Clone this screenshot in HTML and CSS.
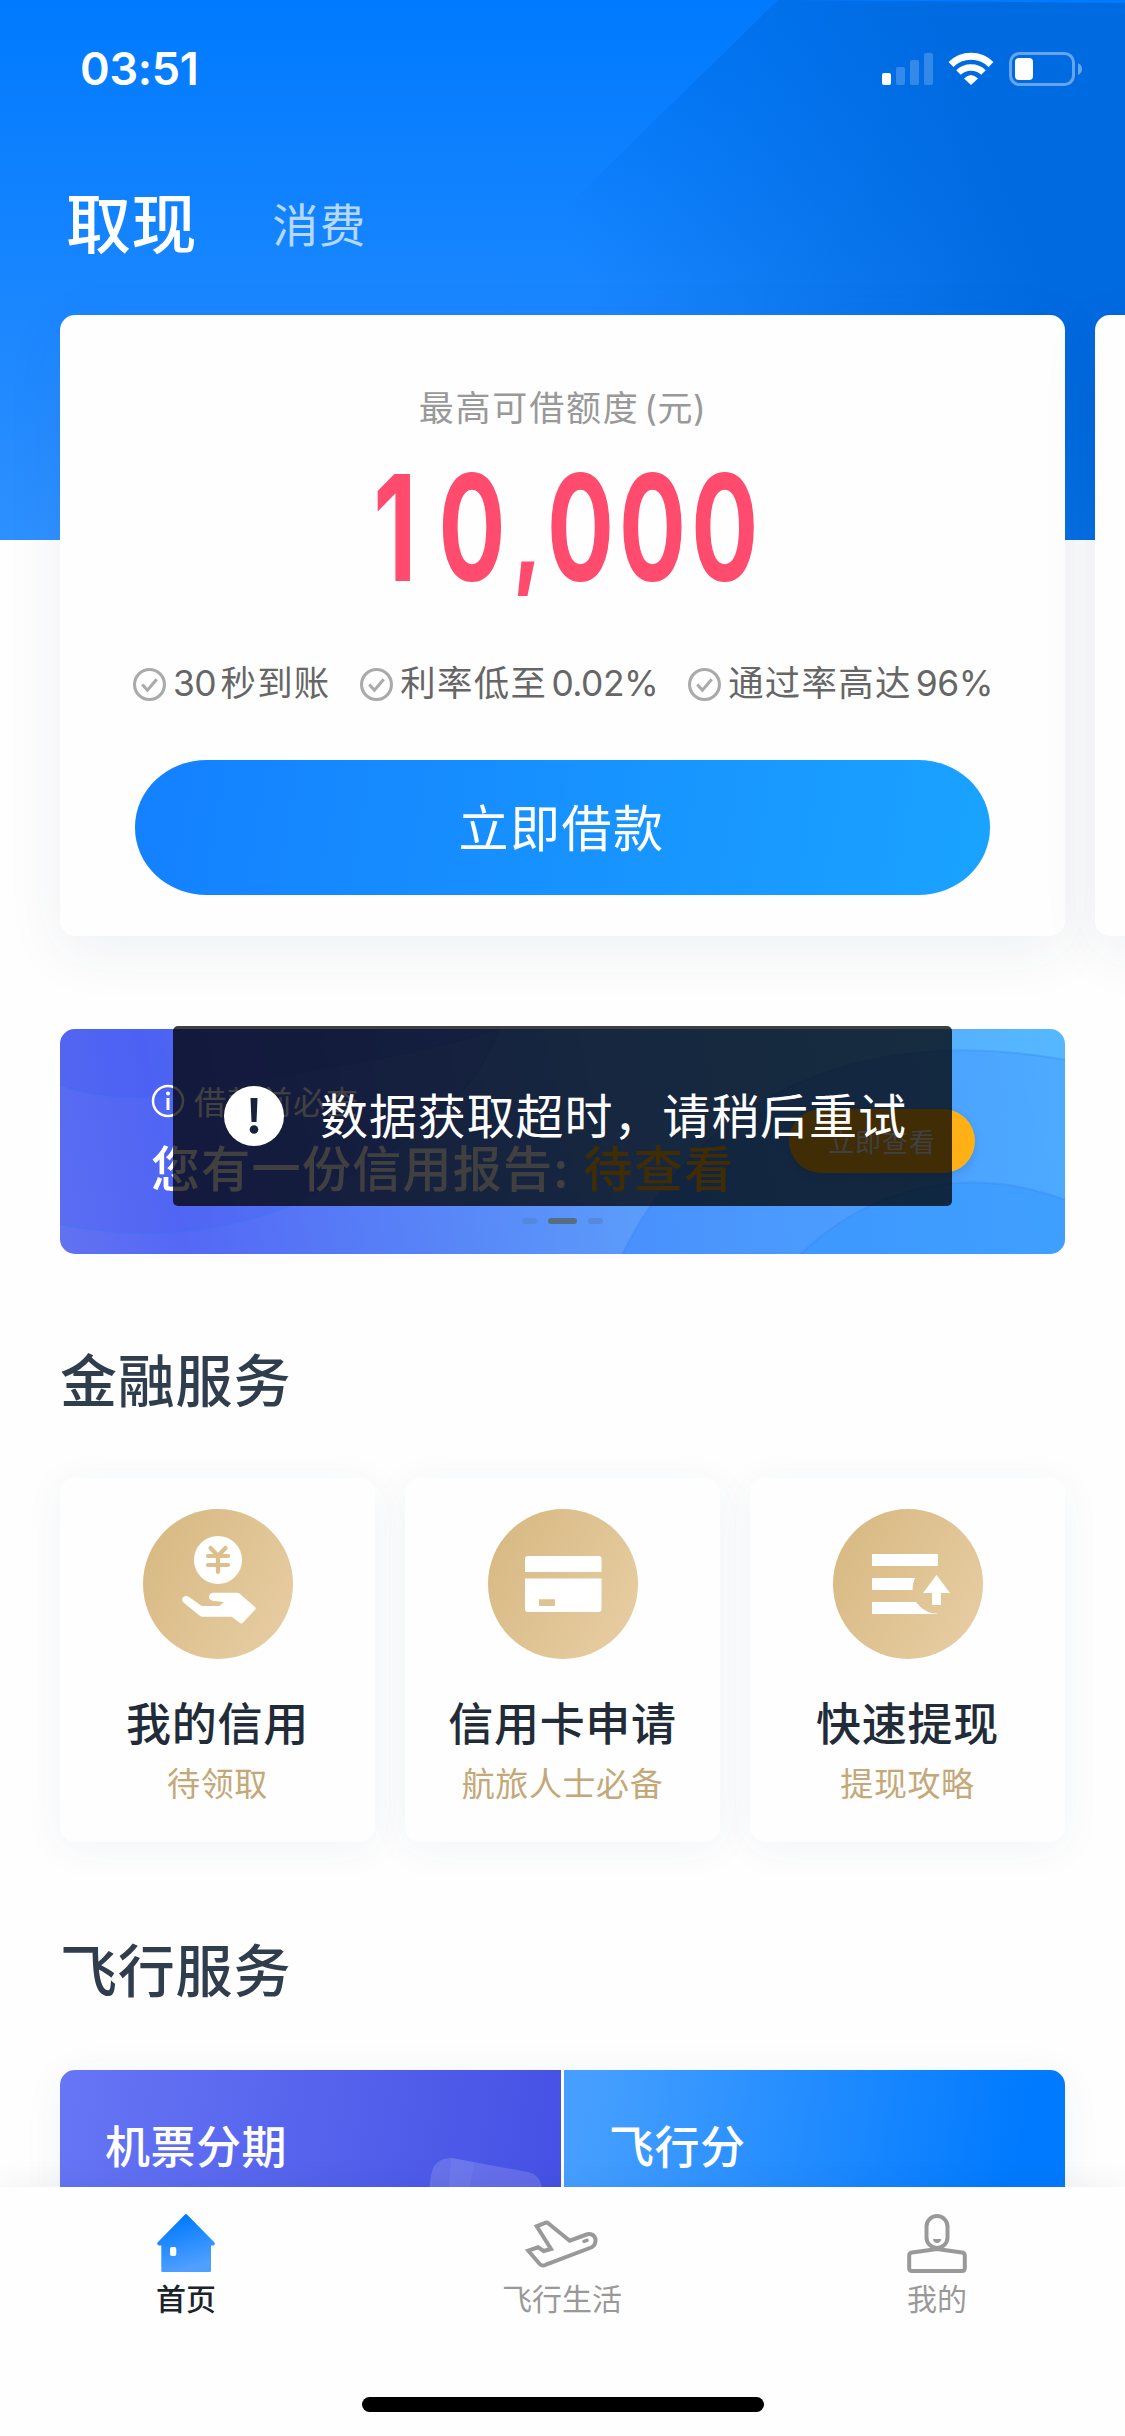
FILE: index.html
```html
<!DOCTYPE html>
<html lang="zh-CN">
<head>
<meta charset="utf-8">
<title>首页</title>
<link rel="stylesheet" href="styles.css">
</head>
<body>
<div class="page">
  <main class="content">
    <svg class="hero-bg" viewBox="0 0 1125 540" aria-hidden="true">
      <defs>
        <linearGradient id="sky" x1="0" y1="0" x2="0" y2="1"><stop offset="0" stop-color="#007aff"/><stop offset="1" stop-color="#2e90ff"/></linearGradient>
        <linearGradient id="shade" gradientUnits="userSpaceOnUse" x1="600" y1="330" x2="1080" y2="150"><stop offset="0" stop-color="#006ae0" stop-opacity="0"/><stop offset=".85" stop-color="#006ae0"/></linearGradient>
      </defs>
      <rect width="1125" height="540" fill="url(#sky)"/>
      <path d="M778 0L1125 3V540H225Z" fill="url(#shade)"/>
    </svg>

    <header class="status">
      <span class="time">03:51</span>
      <svg class="status-icons" width="202" height="36" viewBox="881 51 202 36">
        <g fill="#fff">
          <rect x="882" y="73" width="9" height="12" rx="2"/>
          <g opacity=".2"><rect x="896" y="67" width="9" height="18" rx="2"/><rect x="910" y="60" width="9" height="25" rx="2"/><rect x="924" y="53" width="9" height="32" rx="2"/></g>
          <path d="M971 85L964 78.500Q971 71.500 978 78.500Z"/>
          <rect x="1015" y="58" width="18" height="22" rx="4"/>
          <path d="M1078 63Q1082 65 1082 69T1078 75Z" opacity=".4"/>
        </g>
        <g fill="none" stroke="#fff">
          <path d="M951 64.500A28.500 28.500 0 0 1 991 64.500" stroke-width="7"/>
          <path d="M958.500 72.500A18 18 0 0 1 983.500 72.500" stroke-width="6.500"/>
          <rect x="1010.500" y="53.500" width="63" height="31" rx="9" stroke-width="3" opacity=".4"/>
        </g>
      </svg>
    </header>

    <nav class="tabs"><span class="tab active">取现</span><span class="tab">消费</span></nav>

    <section class="carousel">
      <article class="loan">
        <p class="loan-label">最高可借额度 <span>(元)</span></p>
        <svg class="amount" width="1005" height="232" viewBox="0 0 1005 232">
          <text transform="scale(.7 1)" x="479 588.600 667 743.500 846.500 949.500" y="148 148 143 148 148 148">10<tspan class="comma">,</tspan>000</text>
        </svg>
        <ul class="features">
          <li><svg class="tick" viewBox="0 0 32 32"><circle cx="16" cy="16" r="14.500"/><path d="M9 16l5 5.500 9-10.500"/></svg><span><em>30</em> 秒到账</span></li>
          <li><svg class="tick" viewBox="0 0 32 32"><circle cx="16" cy="16" r="14.500"/><path d="M9 16l5 5.500 9-10.500"/></svg><span>利率低至 <em>0.02%</em></span></li>
          <li><svg class="tick" viewBox="0 0 32 32"><circle cx="16" cy="16" r="14.500"/><path d="M9 16l5 5.500 9-10.500"/></svg><span>通过率高达 <em>96%</em></span></li>
        </ul>
        <button class="borrow">立即借款</button>
      </article>
      <article class="loan"></article>
    </section>

    <section class="banner">
      <svg class="waves" viewBox="0 0 1005 225" aria-hidden="true">
        <defs><linearGradient id="wv" x1="0" y1="0" x2="1" y2="0"><stop offset="0" stop-color="#3f8cff" stop-opacity=".65"/><stop offset="1" stop-color="#3f98ff" stop-opacity=".4"/></linearGradient></defs>
        <g stroke="#2f7af5" stroke-opacity=".25" stroke-width="2">
          <path d="M562 226C630 85 780 -10 1006 31V226Z" fill="url(#wv)"/>
          <path d="M740 226C810 158 905 134 1006 171V226Z" fill="#3296ff" fill-opacity=".5"/>
          <path d="M-1 56Q60 78 140 62C280 36 390 20 440 -1H-1Z" fill="#3f55f0" fill-opacity=".22"/>
          <path d="M-1 195C80 212 160 205 229 177C330 130 410 80 440 -1H-1Z" fill="#3f55f0" fill-opacity=".16"/>
        </g>
      </svg>
      <div class="banner-text">
        <p class="notice"><svg width="34" height="34" viewBox="0 0 34 34"><circle cx="17" cy="17" r="15" fill="none" stroke="#fff" stroke-width="2.500"/><path d="M17 14v12" stroke="#fff" stroke-width="3"/><circle cx="17" cy="9.500" r="2" fill="#fff"/></svg><span>借款前必查</span></p>
        <p class="report">您有一份信用报告<span class="colon">:</span><b>待查看</b></p>
      </div>
      <span class="view">立即查看</span>
      <div class="dots"><i></i><i class="on"></i><i></i></div>
    </section>

    <h2>金融服务</h2>
    <section class="services">
      <article>
        <svg class="badge" viewBox="0 0 150 150">
          <defs><linearGradient id="gold" x1="0" y1=".2" x2="1" y2=".8"><stop offset="0" stop-color="#d8b983"/><stop offset="1" stop-color="#e6cda2"/></linearGradient></defs>
          <circle cx="75" cy="75" r="75" fill="url(#gold)"/>
          <circle cx="75" cy="51" r="24" fill="#fff"/>
          <path d="M67.500 39L75 47L82.500 39M65 47H85M65 56H85M75 47V63" fill="none" stroke="#dcbf8d" stroke-width="4.200" stroke-linecap="round" stroke-linejoin="round"/>
          <path d="M46 88L58.700 97H76.300L81 93L71 92Q66 91.500 66 88T70 83.700H93Q95.500 83.700 97 85L112 98Q113.500 99.300 112 100.700L100 113.500Q98.700 115 97 114L88.700 107.700H60Q58 107.700 56.500 106.500L40.500 93.500Q38 91 40 88.500Q42.500 85.800 46 88Z" fill="#fff"/>
        </svg>
        <h3>我的信用</h3><p>待领取</p>
      </article>
      <article>
        <svg class="badge" viewBox="0 0 150 150">
          <circle cx="75" cy="75" r="75" fill="url(#gold)"/>
          <path d="M40 47H111Q113.500 47 113.500 49.500V63H37V50Q37 47 40 47ZM37 69.500H113.500V100Q113.500 103 110.500 103H40Q37 103 37 100ZM51 90.300V97H67V90.300Z" fill="#fff" fill-rule="evenodd"/>
        </svg>
        <h3>信用卡申请</h3><p>航旅人士必备</p>
      </article>
      <article>
        <svg class="badge" viewBox="0 0 150 150">
          <mask id="cut"><rect width="150" height="150" fill="#fff"/><circle cx="104" cy="80" r="24.500" fill="#000"/></mask>
          <circle cx="75" cy="75" r="75" fill="url(#gold)"/>
          <path d="M39 69H90V81H39ZM39 93H104V105H39Z" fill="#fff" mask="url(#cut)"/>
          <path d="M39 45H105V57H39ZM103.500 66L117 84H108V96H99V84H90Z" fill="#fff"/>
        </svg>
        <h3>快速提现</h3><p>提现攻略</p>
      </article>
    </section>

    <h2>飞行服务</h2>
    <section class="tiles">
      <article class="tile violet">
        <span>机票分期</span>
        <svg class="ticket" width="116" height="40" viewBox="0 0 116 40"><path d="M0 40L3 18Q6 1 24 1L100 15Q115 18 115 40Z" fill="#fff" fill-opacity=".15"/><path d="M23 1L46 5L41 40H20Z" fill="#fff" fill-opacity=".05"/></svg>
      </article>
      <article class="tile azure"><span>飞行分</span></article>
    </section>
  </main>

  <footer class="dock">
    <nav class="tabbar">
      <a class="on">
        <svg width="58" height="58" viewBox="0 0 58 58"><defs><linearGradient id="home" x1="0" y1="0" x2=".3" y2="1"><stop offset=".15" stop-color="#007aff"/><stop offset="1" stop-color="#4f9fff"/></linearGradient></defs><path d="M28 .5Q29 -.5 30 .5L57.500 28.500Q58.500 31.500 56 31.500H54V57Q54 58 53 58H5.300Q4.300 58 4.300 57V31.500H2Q-.5 31 .5 28.500ZM15 33Q13 33 13 35V40Q13 42 15 42H17.500Q19.300 42 19.300 40V35Q19.300 33 17.500 33Z" fill="url(#home)" fill-rule="evenodd"/></svg>
        <span>首页</span>
      </a>
      <a>
        <svg width="76" height="58" viewBox="0 0 76 58" fill="none" stroke="#999" stroke-width="4"><path d="M4.300 36.700L14 33.300L19.700 37L27 35L12.700 12.300L21.700 8.700Q23.200 8.300 24.500 9.500L45.700 26.700L63.300 20.300Q69.500 19 71.500 25Q72 31 67.700 33.300L22 50.700Q18 52.500 15.700 50Z"/><path d="M60 27.300L63 26.300" stroke-linecap="round" stroke-width="3.500"/></svg>
        <span>飞行生活</span>
      </a>
      <a>
        <svg width="60" height="58" viewBox="0 0 60 58" overflow="visible" fill="none" stroke="#999" stroke-width="4"><rect x="19.500" y="2" width="21" height="32" rx="10.500"/><path d="M30 35L5 38.500Q2.200 39 2.200 41.500V54Q2.200 57 5 57H55Q57.800 57 57.800 54V41.500Q57.800 39 55 38.500Z" stroke-linejoin="round"/><path d="M26 25H34.300Q33.500 29 30 29T26 25Z" fill="#999" stroke="none"/></svg>
        <span>我的</span>
      </a>
    </nav>
    <div class="home-bar"></div>
  </footer>

  <div class="toast" role="alert">
    <svg width="60" height="60" viewBox="0 0 60 60"><circle cx="30" cy="30" r="30" fill="#fff"/><path d="M26.500 12H33.500L32.500 36H27.500Z" fill="#17223c"/><circle cx="30" cy="43.500" r="4.300" fill="#17223c"/></svg>
    <span>数据获取超时，请稍后重试</span>
  </div>
</div>
</body>
</html>
```

FILE: styles.css
```css
* { box-sizing: border-box; margin: 0; padding: 0; }
body {
  width: 1125px;
  background: #fefefe;
  font-family: Inter, "Noto Sans CJK SC", sans-serif;
}
svg { display: block; flex: none; }
.page {
  position: relative;
  display: flex;
  flex-direction: column;
  width: 1125px;
  height: 2436px;
  overflow: hidden;
}
.content { position: relative; height: 2187px; overflow: hidden; }
.hero-bg { position: absolute; inset: 0 0 auto; width: 1125px; height: 540px; z-index: -1; }

.status {
  display: flex;
  justify-content: space-between;
  align-items: center;
  height: 138px;
  padding: 0 42px 0 80px;
}
.time { color: #fff; font-size: 45px; font-weight: 600; line-height: 60px; letter-spacing: -0.3px; }
.tabs {
  display: flex;
  align-items: center;
  gap: 75px;
  height: 100px;
  margin-top: 32px;
  padding-left: 66px;
  font-family: "Noto Sans CJK SC", sans-serif;
}
.tab { color: rgba(255, 255, 255, .7); font-size: 46px; line-height: 60px; letter-spacing: 1px; padding-top: 3px; }
.tab.active { color: #fff; font-size: 65px; font-weight: 500; line-height: 90px; letter-spacing: .6px; padding-top: 0; }

.carousel { display: flex; gap: 30px; margin-top: 45px; padding-left: 60px; }
.loan {
  flex: none;
  width: 1005px;
  height: 621px;
  padding-top: 67px;
  border-radius: 15px;
  background: #fefefe;
  box-shadow: 0 15px 60px rgba(40, 60, 100, .07);
}
.loan-label {
  height: 50px;
  color: #999;
  font-size: 35px;
  line-height: 52px;
  letter-spacing: 1.800px;
  word-spacing: -7px;
  text-align: center;
}
.loan-label span { letter-spacing: .5px; }
.amount text {
  fill: #ff4b6e;
  stroke: #ff4b6e;
  stroke-width: 2px;
  font: 600 145px Inter, sans-serif;
  text-anchor: middle;
}
.amount .comma { font-size: 100px; stroke-width: 5px; }
.features {
  display: flex;
  justify-content: space-between;
  padding: 0 72px 0 73px;
  list-style: none;
  color: #666;
}
.features li { display: flex; align-items: center; gap: 7px; font-size: 35.400px; line-height: 40px; letter-spacing: 1.300px; white-space: nowrap; word-spacing: -7px; }
.features em { font-style: normal; letter-spacing: -.5px; }
.tick { width: 33px; height: 33px; fill: none; stroke: #aaa; stroke-width: 3; }
.borrow {
  display: block;
  width: 855px;
  height: 135px;
  margin: 56px auto 0;
  padding: 0 2px 6px 0;
  border: 0;
  border-radius: 72px / 67px;
  background: linear-gradient(100deg, #1480ff, #1aa3ff);
  color: #fff;
  font: 400 50px "Noto Sans CJK SC", sans-serif;
  letter-spacing: 1.500px;
}

.banner {
  position: relative;
  display: flex;
  justify-content: space-between;
  width: 1005px;
  height: 225px;
  margin: 93px 60px 0;
  padding: 0 90px 0 91px;
  border-radius: 15px;
  overflow: hidden;
  background: linear-gradient(78deg, #6272f2 0%, #5468f5 12%, #5b9bfa 55%, #55b8ff 100%);
  color: #fff;
  font-family: "Noto Sans CJK SC", sans-serif;
}
.waves { position: absolute; inset: 0; width: 1005px; height: 225px; }
.banner-text { position: relative; padding-top: 49px; }
.notice { display: flex; align-items: center; gap: 9px; height: 46px; font-size: 32px; line-height: 44px; letter-spacing: 1px; }
.notice span { height: 46px; }
.report { margin-top: 9px; font-size: 49px; font-weight: 500; line-height: 66px; letter-spacing: 1.300px; white-space: nowrap; }
.colon { display: inline-block; width: 30px; }
.report b { font-weight: 500; color: #ffae14; }
.view {
  position: relative;
  width: 186px;
  height: 64px;
  margin-top: 80px;
  border-radius: 32px;
  background: #ffb014;
  box-shadow: 0 3px 8px rgba(20, 70, 170, .2);
  font-size: 26px;
  line-height: 64px;
  letter-spacing: 1px;
  text-align: center;
}
.dots { position: absolute; left: 0; right: 0; bottom: 30px; display: flex; justify-content: center; gap: 11px; }
.dots i { width: 15px; height: 6px; border-radius: 3px; background: #5488e0; }
.dots .on { width: 29px; background: #596d82; }

h2 {
  height: 80px;
  margin: 85px 0 59px 60px;
  color: #2f3d4c;
  font: 500 57px/76px "Noto Sans CJK SC", sans-serif;
  letter-spacing: .8px;
}
.services { display: flex; gap: 30px; margin: 0 60px; }
.services article {
  display: flex;
  flex-direction: column;
  align-items: center;
  width: 315px;
  height: 364px;
  padding-top: 31px;
  border-radius: 15px;
  background: #fefefe;
  box-shadow: 0 6px 42px rgba(40, 70, 130, .055);
  font-family: "Noto Sans CJK SC", sans-serif;
}
.badge { width: 150px; height: 150px; }
h3 { margin-top: 33px; color: #212c38; font-size: 45px; font-weight: 500; line-height: 60px; letter-spacing: .7px; }
.services p { margin-top: 1px; color: #c4a878; font-size: 33px; line-height: 58px; letter-spacing: .6px; }
.services + h2 { margin-top: 87px; margin-bottom: 61px; }

.tiles { display: flex; gap: 3px; margin: 0 60px; height: 200px; box-shadow: 0 6px 42px rgba(40, 70, 130, .06); border-radius: 15px; }
.tile {
  display: flex;
  flex: none;
  width: 501px;
  padding: 42px 0 0 45px;
  color: #fff;
  font: 500 45px/66px "Noto Sans CJK SC", sans-serif;
  letter-spacing: .5px;
}
.violet { justify-content: space-between; padding-right: 17px; border-radius: 15px 0 0; background: linear-gradient(100deg, #6676f5, #4450e4); }
.azure { border-radius: 0 15px 0 0; background: linear-gradient(100deg, #469fff 5%, #007aff 88%); }
.ticket { margin-top: 45px; }

.dock {
  display: flex;
  flex-direction: column;
  justify-content: space-between;
  align-items: center;
  height: 249px;
  padding: 27px 0 24px;
  background: #fefefe;
  box-shadow: 0 -4px 30px rgba(0, 0, 0, .05);
  z-index: 1;
}
.tabbar { display: flex; width: 1125px; }
.tabbar a {
  display: flex;
  flex: 1 0 375px;
  width: 375px;
  flex-direction: column;
  align-items: center;
  gap: 3px;
  padding-right: 1px;
  color: #999;
  font: 400 30px/44px "Noto Sans CJK SC", sans-serif;
}
.tabbar .on { padding-right: 3px; color: #1b232c; font-weight: 500; }
.home-bar { width: 402px; height: 15px; border-radius: 8px; background: #000; }

.toast {
  position: absolute;
  top: 1026px;
  left: 173px;
  z-index: 2;
  display: flex;
  align-items: center;
  gap: 36px;
  width: 779px;
  height: 180px;
  padding-left: 51px;
  border-radius: 5px;
  background: rgba(0, 0, 0, .75);
  color: #fff;
  font: 400 48px/66px "Noto Sans CJK SC", sans-serif;
  letter-spacing: .9px;
  white-space: nowrap;
}
.toast span { padding-bottom: 7px; }
```
